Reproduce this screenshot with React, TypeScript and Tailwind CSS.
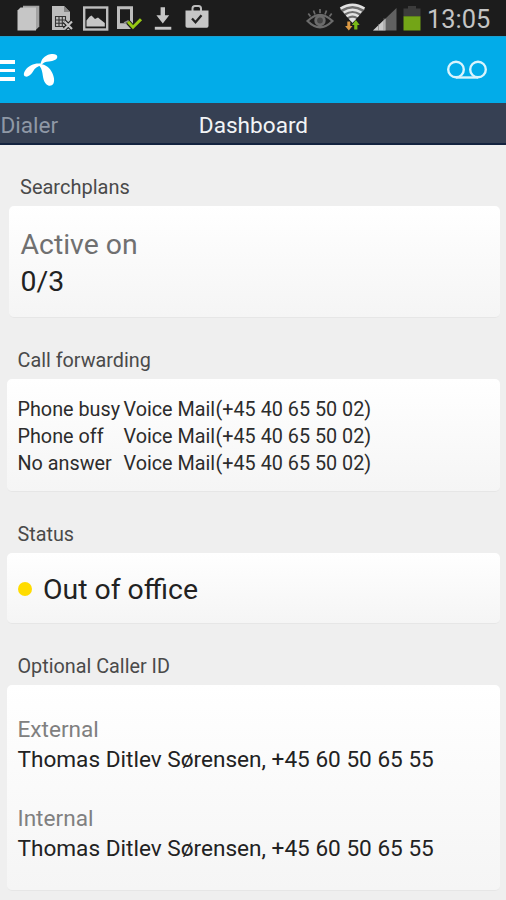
import React from 'react';

const PagesIcon = () => (
  <svg width="24" height="36" viewBox="0 0 24 36" className="ml-4">
    <path d="M7 5.8h16.3v20.7l-3 3H7z" fill="#a2a2a2" />
    <path d="M4.5 7.5H20v23H1.5v-20z" fill="#c6c6c6" />
  </svg>
);

const SheetIcon = () => (
  <svg width="23" height="36" viewBox="0 0 23 36" className="ml-[11px]">
    <path d="M1 6h12l6 6v18H1z" fill="#bdbdbd" />
    <path d="M13 6v6h6z" fill="#858585" />
    <path d="M4.5 16.5h10v10h-10zM4.5 20h10M4.5 23.3h10M8 16.5v10M11.3 16.5v10" fill="none" stroke="#333" strokeWidth="1.1" />
    <path d="M13.5 21.5l7.5 7.5M21 21.5L13.5 29" stroke="#1c1c1c" strokeWidth="4.5" />
    <path d="M13.5 21.5l7.5 7.5M21 21.5L13.5 29" stroke="#c4c4c4" strokeWidth="2.2" />
  </svg>
);

const PictureIcon = () => (
  <svg width="26" height="36" viewBox="0 0 26 36" className="ml-[9px]">
    <rect x="1.2" y="7.5" width="23" height="22" fill="none" stroke="#bdbdbd" strokeWidth="2.4" />
    <path d="M3.5 26.5v-6l3-3.8 2-1.2 3.5 3.5 3-1.5 3 2.5 3.8 3v3.5z" fill="#c6c6c6" />
  </svg>
);

const PhoneCheckIcon = () => (
  <svg width="27" height="36" viewBox="0 0 27 36" className="ml-[7px]">
    <path fillRule="evenodd" d="M1 6.3h16V29H1zM4 9.3v14h10v-14z" fill="#bdbdbd" />
    <path d="M8 23l4-2 2 3" stroke="#8d8d8d" strokeWidth="1.5" fill="none" />
    <path d="M12 22l5 5.5L25 19" fill="none" stroke="#1c1c1c" strokeWidth="5" />
    <path d="M12 21.8l5 5.4 8-8" fill="none" stroke="#96c814" strokeWidth="3" />
  </svg>
);

const DownloadIcon = () => (
  <svg width="18" height="36" viewBox="0 0 18 36" className="ml-[11px]">
    <path d="M6.6 7.2H11v8h4.2l-6.4 8.3-6.4-8.3h4.2z" fill="#c6c6c6" />
    <path d="M.8 26.8h16.5v2.9H.8z" fill="#c6c6c6" />
  </svg>
);

const BagIcon = () => (
  <svg width="24" height="36" viewBox="0 0 24 36" className="ml-[13px]">
    <path d="M7.5 11V8.5Q7.5 6 10 6h3.500q2.500 0 2.500 2.500V11" fill="none" stroke="#bdbdbd" strokeWidth="2" />
    <path d="M.5 10.500h23V26q0 1.700-1.700 1.700H2.200Q.5 27.700.5 26z" fill="#c6c6c6" />
    <path d="M7 18.500l3.500 3.700 6-7" fill="none" stroke="#222" strokeWidth="2.300" />
  </svg>
);

const EyeIcon = () => (
  <svg width="28" height="36" viewBox="0 0 28 36" fill="none" stroke="#6b6b6b">
    <path d="M1.500 21q12.500-12.500 25 0-12.500 12.500-25 0z" strokeWidth="2.200" />
    <circle cx="14" cy="20.500" r="4.300" fill="#454545" strokeWidth="2.800" />
    <path d="M14 9v4M7.500 10.500l1.500 4M20.500 10.500l-1.500 4M2.300 13.500l2.200 3M25.700 13.500l-2.200 3" strokeWidth="1.700" />
  </svg>
);

const WifiIcon = () => (
  <svg width="27" height="36" viewBox="0 0 27 36" fill="none" className="ml-[5px]">
    <path d="M1 9q12.500-8 25 0L13.500 23z" fill="#6e6e6e" />
    <path d="M1.500 8.500q12-7.500 24 0M4.700 12.500q8.800-5.500 17.600 0M7.500 16.300q6-4 12 0" stroke="#e2e2e2" strokeWidth="2.500" />
    <path d="M9.700 18.800q3.800-2.200 7.600 0l-3.800 4z" fill="#e2e2e2" />
    <path d="M8.300 21.500h3V26h2.200l-3.700 4.500L6.100 26h2.200z" fill="#dc9a44" />
    <path d="M15.200 29.500h3.200V25h2.300l-3.900-5-3.900 5h2.300z" fill="#79ba16" />
  </svg>
);

const SignalIcon = () => (
  <svg width="24" height="36" viewBox="0 0 24 36" className="ml-[7px]">
    <path d="M0 30.500L23.500 8v22.500z" fill="#616161" />
    <path d="M0 30.500l12.500-12v12z" fill="#c9c9c9" />
    <path d="M5.500 24v7M11 18v13" stroke="#777" strokeWidth=".6" />
  </svg>
);

const BatteryIcon = () => (
  <svg width="18" height="36" viewBox="0 0 18 36" className="ml-[6px]">
    <path d="M.5 8.500H5V6h8v2.500h4.500v8H.5z" fill="#3c3c3c" />
    <path d="M.5 16.300h17v14.200H.5z" fill="#73a517" />
  </svg>
);

const StatusBar = () => (
  <div className="flex h-9 items-center bg-[#1c1c1c]">
    <PagesIcon />
    <SheetIcon />
    <PictureIcon />
    <PhoneCheckIcon />
    <DownloadIcon />
    <BagIcon />
    <div className="ml-auto flex items-center pr-[16px]">
      <EyeIcon />
      <WifiIcon />
      <SignalIcon />
      <BatteryIcon />
      <span className="ml-[6px] w-[63px] whitespace-nowrap pt-[3px] text-[25.4px] leading-[33px] text-[#c4c4c4]">13:05</span>
    </div>
  </div>
);

const Header = () => (
  <div className="flex h-[67px] items-center border-t border-[#1b9fd0] bg-[#02ace9] pb-px">
    <div className="flex w-[15px] flex-col gap-[5px] pt-[2px]">
      <div className="h-[3.5px] bg-white" />
      <div className="h-[3.5px] bg-white" />
      <div className="h-[3.5px] bg-white" />
    </div>
    <svg width="36" height="34" viewBox="0 0 36 34" fill="#fff" className="ml-[8px]">
      <path d="M17.500 11.500C18 6.500 21.500 2.500 27 1.300c4-.8 7.300 0 7.300 2.500 0 3-4 4.300-8.300 4.600-3.500.3-5.500.9-7 2.900z" />
      <path d="M18.500 10.700C12.500 9.500 6 12 2.500 17c-2.200 3-2.200 6.200.2 6.600 3 .5 6-2.500 7.600-5.500 1.600-3 4-5 8.200-5.600z" />
      <path d="M16.500 10.700c6.500.7 10.500 4.200 12.800 9.200 2.500 5.500 2.500 10.500-.5 12.300-3.200 1.700-7-1.300-8.200-5.800-1.200-5-1-10.300-4.500-14z" />
    </svg>
    <svg width="42" height="20" viewBox="0 0 42 20" fill="none" stroke="#d9f4fd" strokeWidth="2.400" className="ml-auto mr-[18px]">
      <circle cx="10" cy="9.500" r="7.800" />
      <circle cx="32" cy="9.500" r="7.800" />
      <path d="M10 17.500h22" />
    </svg>
  </div>
);

const Tabs = () => (
  <div className="grid h-[42px] grid-cols-3 border-b-2 border-[#13233f] bg-[#364053] pt-[3px] text-[22.6px] leading-[39px]">
    <span className="pl-[0.5px] text-[#8f98a6]">Dialer</span>
    <span className="pl-px text-center text-[#f2f4f6]">Dashboard</span>
  </div>
);

const CARD = 'rounded-[5px] border-b border-[#e6e6e6] bg-linear-to-b from-white to-[#f5f5f5]';
const LABEL = 'mt-[31px] leading-6 text-[#4a4a4a]';

const forwards = ['Phone busy', 'Phone off', 'No answer'];
const callerIds = ['External', 'Internal'];

export default function App() {
  return (
    <div className="h-[900px] w-[506px] overflow-hidden bg-[#efefef] font-[Roboto,sans-serif] text-[#222]">
      <StatusBar />
      <Header />
      <Tabs />

      <div className="pr-[6px] pl-[7px]">
        <h2 className="mt-[30px] pl-[13px] text-[20px] leading-6 text-[#4a4a4a]">Searchplans</h2>
        <div className={`${CARD} mt-[7px] ml-[2px] h-[112px] pt-[20px] pl-[11.5px]`}>
          <div className="text-[28.4px] leading-[37px] text-[#707070]">Active on</div>
          <div className="text-[28.4px] leading-[37px]">0/3</div>
        </div>

        <h2 className={`${LABEL} pl-[10.5px] text-[19.8px]`}>Call forwarding</h2>
        <div className={`${CARD} mt-[6px] h-[113px] pt-[17px] pl-[10.5px] text-[19.8px] leading-[27px] text-[#2c2c2c]`}>
          {forwards.map((name) => (
            <div key={name} className="flex whitespace-nowrap">
              <span className="w-[106px]">{name}</span>
              <span className="w-[92px]">Voice Mail</span>
              <span>(+45 40 65 50 02)</span>
            </div>
          ))}
        </div>

        <h2 className={`${LABEL} pl-[10.5px] text-[19.8px]`}>Status</h2>
        <div className={`${CARD} mt-[6px] flex h-[71px] items-center pl-[10.5px]`}>
          <div className="mt-px h-[14px] w-[14px] rounded-full bg-[#ffdc00]" />
          <span className="ml-[11.5px] pt-[3px] text-[28.4px] leading-9">Out of office</span>
        </div>

        <h2 className={`${LABEL} pl-[10.5px] text-[19.8px]`}>Optional Caller ID</h2>
        <div className={`${CARD} mt-[6px] flex h-[206px] flex-col gap-[29px] pt-[30px] pl-[10.5px]`}>
          {callerIds.map((label) => (
            <div key={label} className="text-[22.6px] leading-[30px]">
              <div className="text-[#808080]">{label}</div>
              <div>Thomas Ditlev Sørensen, +45 60 50 65 55</div>
            </div>
          ))}
        </div>
      </div>
    </div>
  );
}
